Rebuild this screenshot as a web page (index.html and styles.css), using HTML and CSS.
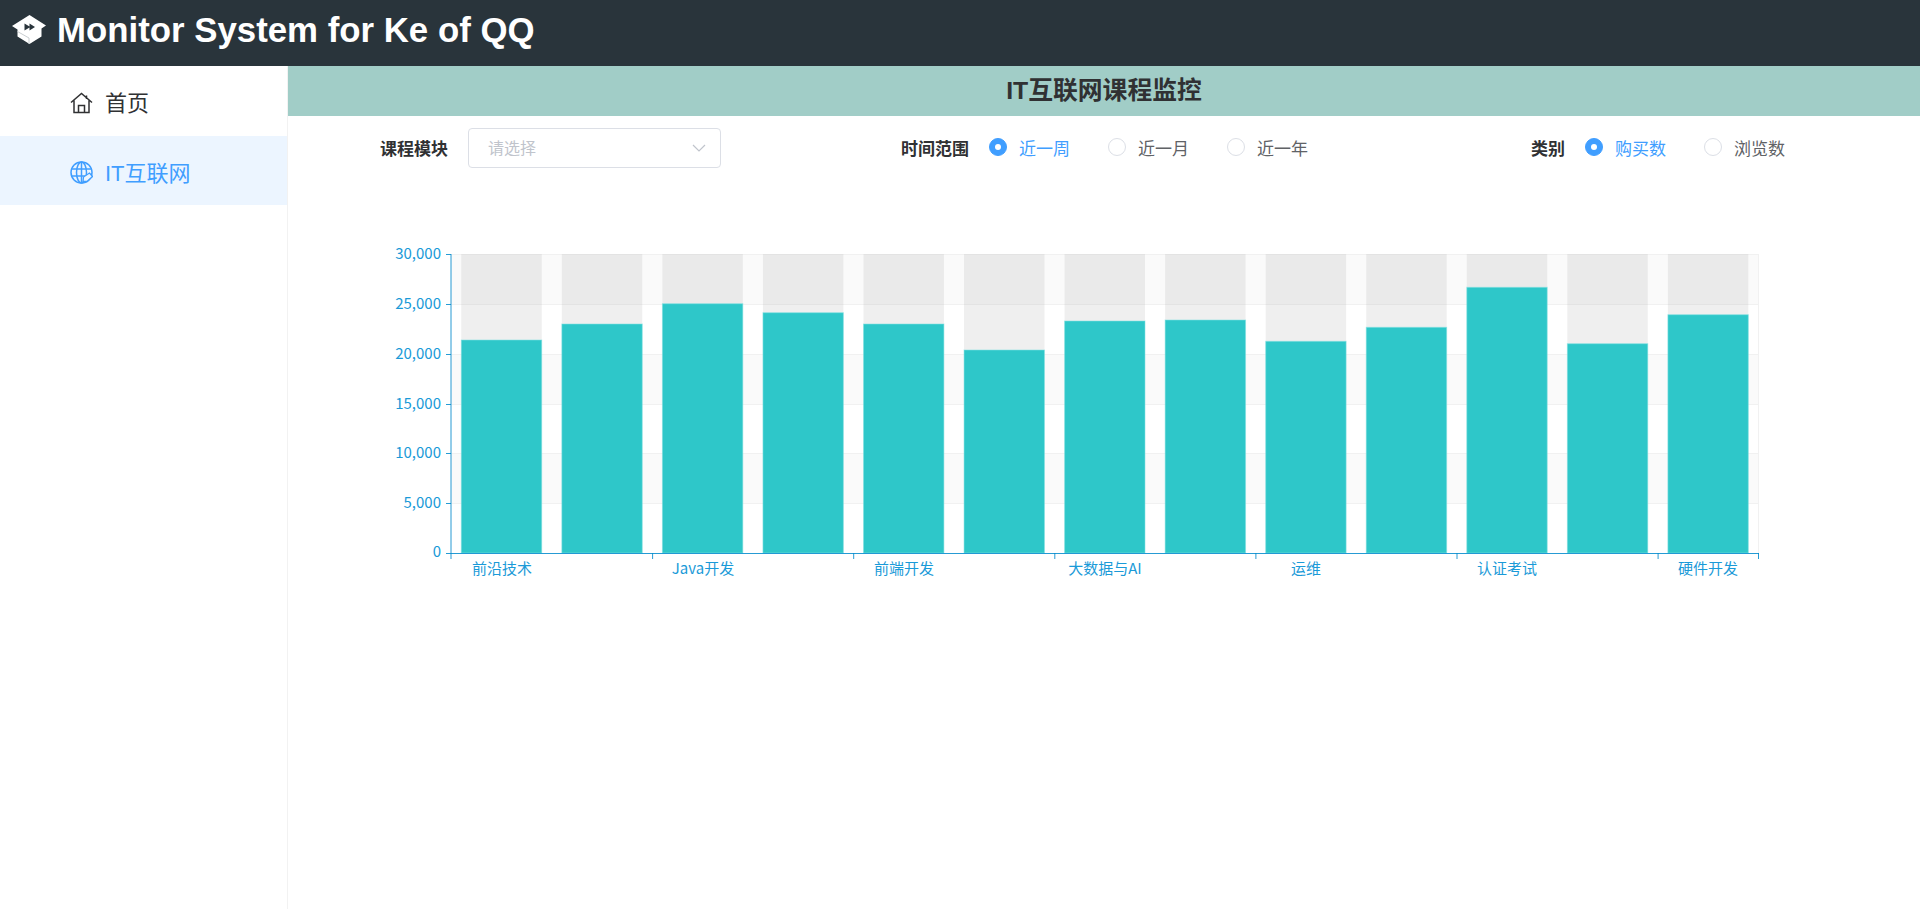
FILE: index.html
```html
<!DOCTYPE html>
<html lang="zh">
<head>
<meta charset="utf-8">
<title>Monitor System for Ke of QQ</title>
<link rel="stylesheet" href="styles.css">
</head>
<body>
<header class="topbar">
  <svg class="logo" viewBox="0 0 34 29" width="34" height="29">
    <path class="logo-fill" d="M17.5 0 L34 10.5 L29.5 13.5 L29.5 21.5 L17.5 29 L5.5 21.5 L5.5 14.5 L0 11 Z"/>
    <path class="logo-dark" d="M12.5 8.5 L17.5 11.5 L17.5 8.5 L23 12 L17.5 15.5 L17.5 12.5 L12.5 15.5 Z"/>
    <path class="logo-line" d="M5.5 16.5 L17 23 V29"/>
  </svg>
  <h1 class="brand">Monitor System for Ke of QQ</h1>
</header>
<div class="shell">
  <aside class="sidebar">
    <a class="menu-item">
      <svg class="menu-icon icon-home" viewBox="0 0 23 22" width="23" height="22"><path d="M1 10.5 L11.5 1.5 L22 10.5 M4 8.5 V20.5 H19 V8.5 M8.5 20.5 V13.5 H14.5 V20.5 M16.5 3.5 V7"/></svg>
      <span>首页</span>
    </a>
    <a class="menu-item is-active">
      <svg class="menu-icon icon-globe" viewBox="0 0 23 23" width="23" height="23"><circle cx="11.5" cy="11.5" r="10.5"/><ellipse cx="11.5" cy="11.5" rx="5" ry="10.5"/><path d="M1 8 H22 M1 15 H22 M11.5 1 V22"/><path class="tag" d="M13 20.5 L13.5 16 L19.5 12 L22.5 15.5 L17 20.5 Z"/></svg>
      <span>IT互联网</span>
    </a>
  </aside>
  <main class="content">
    <div class="page-title">IT互联网课程监控</div>
    <div class="filters">
      <div class="field field-module">
        <label class="field-label">课程模块</label>
        <div class="select">
          <span class="placeholder">请选择</span>
          <svg class="chevron" viewBox="0 0 14 8" width="14" height="8"><path d="M1 1 L7 7 L13 1"/></svg>
        </div>
      </div>
      <div class="field field-time">
        <label class="field-label">时间范围</label>
        <div class="radios">
          <span class="radio is-checked"><i class="dot"></i>近一周</span>
          <span class="radio"><i class="dot"></i>近一月</span>
          <span class="radio"><i class="dot"></i>近一年</span>
        </div>
      </div>
      <div class="field field-type">
        <label class="field-label">类别</label>
        <div class="radios">
          <span class="radio is-checked"><i class="dot"></i>购买数</span>
          <span class="radio"><i class="dot"></i>浏览数</span>
        </div>
      </div>
    </div>
    <svg class="chart" viewBox="0 0 1632 420" width="1632" height="420">
      <g class="bands">
        <rect x="163" y="55" width="1307" height="50"/>
        <rect x="163" y="155" width="1307" height="50"/>
        <rect x="163" y="254" width="1307" height="50"/>
      </g>
      <g class="gridlines">
        <path d="M163 55.5H1470M163 105.5H1470M163 155.5H1470M163 205.5H1470M163 254.5H1470M163 304.5H1470M1470.5 55V354"/>
      </g>
      <g class="shadows">
        <rect x="173.3" y="55" width="80.4" height="299"/>
        <rect x="273.85" y="55" width="80.4" height="299"/>
        <rect x="374.4" y="55" width="80.4" height="299"/>
        <rect x="474.95" y="55" width="80.4" height="299"/>
        <rect x="575.5" y="55" width="80.4" height="299"/>
        <rect x="676.05" y="55" width="80.4" height="299"/>
        <rect x="776.6" y="55" width="80.4" height="299"/>
        <rect x="877.15" y="55" width="80.4" height="299"/>
        <rect x="977.7" y="55" width="80.4" height="299"/>
        <rect x="1078.25" y="55" width="80.4" height="299"/>
        <rect x="1178.8" y="55" width="80.4" height="299"/>
        <rect x="1279.35" y="55" width="80.4" height="299"/>
        <rect x="1379.9" y="55" width="80.4" height="299"/>
      </g>
      <g class="bars">
        <rect x="173.3" y="141" width="80.4" height="213"/>
        <rect x="273.85" y="125" width="80.4" height="229"/>
        <rect x="374.4" y="104.7" width="80.4" height="249.3"/>
        <rect x="474.95" y="113.7" width="80.4" height="240.3"/>
        <rect x="575.5" y="125" width="80.4" height="229"/>
        <rect x="676.05" y="151" width="80.4" height="203"/>
        <rect x="776.6" y="122" width="80.4" height="232"/>
        <rect x="877.15" y="121" width="80.4" height="233"/>
        <rect x="977.7" y="142.3" width="80.4" height="211.7"/>
        <rect x="1078.25" y="128.3" width="80.4" height="225.7"/>
        <rect x="1178.8" y="88.3" width="80.4" height="265.7"/>
        <rect x="1279.35" y="144.7" width="80.4" height="209.3"/>
        <rect x="1379.9" y="115.7" width="80.4" height="238.3"/>
      </g>
      <path class="axis axis-y" d="M163 55V354"/>
      <path class="axis" d="M158 55.5H163M158 105.5H163M158 155.5H163M158 205.5H163M158 254.5H163M158 304.5H163M158 354.5H1471M163 354V360M364.6 354V360M565.7 354V360M766.8 354V360M967.9 354V360M1169 354V360M1370.1 354V360M1470.5 354V360"/>
      <g class="y-labels">
        <text x="153" y="60">30,000</text>
        <text x="153" y="110">25,000</text>
        <text x="153" y="160">20,000</text>
        <text x="153" y="210">15,000</text>
        <text x="153" y="259">10,000</text>
        <text x="153" y="309">5,000</text>
        <text x="153" y="358">0</text>
      </g>
      <g class="x-labels">
        <text x="214" y="375">前沿技术</text>
        <text x="415" y="375">Java开发</text>
        <text x="616" y="375">前端开发</text>
        <text x="817" y="375">大数据与AI</text>
        <text x="1018" y="375">运维</text>
        <text x="1219" y="375">认证考试</text>
        <text x="1420" y="375">硬件开发</text>
      </g>
    </svg>
  </main>
</div>
</body>
</html>
```
FILE: styles.css
```css
* { box-sizing: border-box; }
html, body { margin: 0; height: 100%; }
body {
  background: #fff;
  color: #303133;
  font-family: "Liberation Sans", "Noto Sans CJK SC", sans-serif;
  overflow: hidden;
}
.topbar {
  height: 66px;
  background: #29343b;
  display: flex;
  align-items: center;
  padding-left: 12px;
  gap: 11px;
}
.logo { display: block; margin-top: -7px; flex: none; }
.logo-fill { fill: #fff; }
.logo-dark { fill: #29343b; }
.logo-line { fill: none; stroke: #c9ced1; stroke-width: 1; }
.brand {
  margin: -5px 0 0;
  color: #fff;
  font-size: 34.8px;
  font-weight: 700;
  line-height: 1;
}
.shell { display: flex; height: 843px; }
.sidebar {
  width: 288px;
  flex: none;
  border-right: 1px solid #f2f2f2;
}
.menu-item {
  height: 69px;
  display: flex;
  align-items: center;
  padding-left: 70px;
  gap: 12px;
  font-size: 22px;
  color: #303133;
}
.menu-item:first-child { height: 70px; }
.menu-item.is-active { background: #ecf5ff; color: #409eff; }
.menu-icon { fill: none; stroke: currentColor; stroke-width: 1.5; flex: none; }
.icon-home { margin-top: 3px; }
.icon-globe { margin-top: 4px; }
.icon-globe .tag { fill: #ecf5ff; stroke-width: 1.3; }
.content { flex: 1; min-width: 0; }
.page-title {
  height: 50px;
  background: #a1cdc7;
  text-align: center;
  font-size: 24.8px;
  font-weight: 700;
  line-height: 50px;
  color: #303133;
}
.filters {
  height: 40px;
  margin-top: 12px;
  display: flex;
  align-items: center;
  padding-left: 92px;
}
.field { display: flex; align-items: center; }
.field-label { font-size: 17px; font-weight: 700; color: #303133; margin: -2px 20px 0 0; }
.select {
  width: 253px;
  height: 40px;
  border: 1px solid #dcdfe6;
  border-radius: 4px;
  display: flex;
  align-items: center;
  justify-content: space-between;
  padding: 0 14px 0 19px;
}
.placeholder { font-size: 16px; color: #c0c4cc; margin-top: -2px; }
.chevron { fill: none; stroke: #c0c4cc; stroke-width: 1.2; }
.field-time { margin-left: 180px; }
.field-type { margin-left: 223px; }
.radios { display: flex; gap: 38px; margin-top: -2px; }
.radio {
  display: flex;
  align-items: center;
  gap: 12px;
  font-size: 17px;
  color: #606266;
}
.dot {
  width: 18px;
  height: 18px;
  border-radius: 50%;
  border: 1px solid #dcdfe6;
  background: #fff;
}
.radio.is-checked { color: #409eff; }
.radio.is-checked .dot { background: #409eff; border-color: #409eff; position: relative; }
.radio.is-checked .dot::after {
  content: "";
  position: absolute;
  left: 5px;
  top: 5px;
  width: 6px;
  height: 6px;
  border-radius: 50%;
  background: #fff;
}
.chart { display: block; margin-top: 31px; }
.bands rect { fill: #fafafa; }
.gridlines path { stroke: #f1f1f1; stroke-width: 1; fill: none; }
.shadows rect { fill: rgba(150,150,150,.155); }
.bars rect { fill: #2ec7c9; stroke: rgba(130,225,226,.55); stroke-width: 1; }
.axis { stroke: #008acd; stroke-width: 1; fill: none; opacity: .85; }
.y-labels text, .x-labels text {
  fill: #1a9ad8;
  font-family: "Noto Sans CJK SC", "Liberation Sans", sans-serif;
  font-size: 15px;
}
.y-labels text { text-anchor: end; }
.x-labels text { text-anchor: middle; }
```
